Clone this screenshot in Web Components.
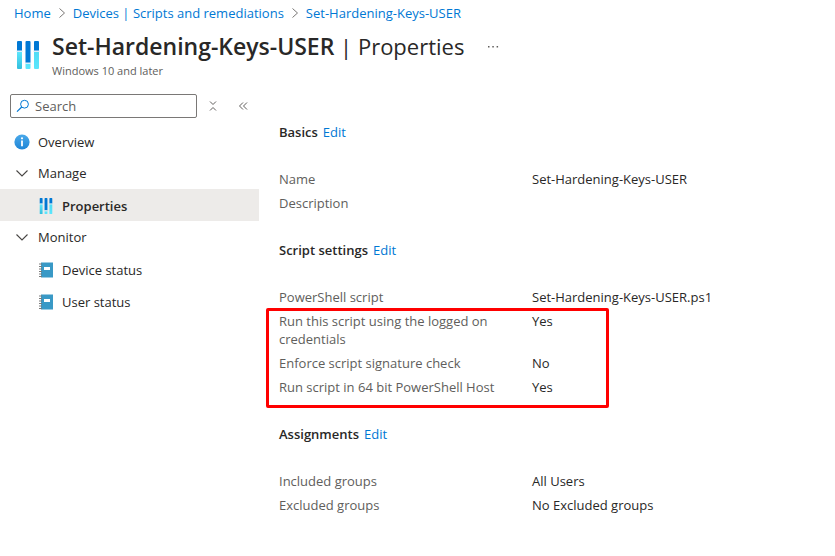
<!DOCTYPE html>
<html lang="en">
<head>
<meta charset="utf-8">
<title>Set-Hardening-Keys-USER | Properties</title>
<style>
  body {
    margin: 0;
    background: #fff;
    color: #292827;
    font: 13px/18px "Open Sans", "Noto Sans", sans-serif;
    --link: #0078d4;
    --muted: #605e5c;
  }
</style>
</head>
<body>
<portal-page>
  <bread-crumbs slot="crumbs">
    <a href="#home">Home</a>
    <a href="#scripts">Devices | Scripts and remediations</a>
    <a href="#script">Set-Hardening-Keys-USER</a>
  </bread-crumbs>
  <blade-title slot="title">
    <span slot="name">Set-Hardening-Keys-USER</span>
    <span slot="view">Properties</span>
    <span slot="sub">Windows 10 and later</span>
  </blade-title>
  <side-menu slot="menu">
    <menu-item icon="info" href="#overview">Overview</menu-item>
    <menu-group label="Manage">
      <menu-item icon="sliders" href="#properties" nested current>Properties</menu-item>
    </menu-group>
    <menu-group label="Monitor">
      <menu-item icon="book" href="#device" nested>Device status</menu-item>
      <menu-item icon="book" href="#user" nested>User status</menu-item>
    </menu-group>
  </side-menu>
  <summary-section heading="Basics">
    <summary-row label="Name">Set-Hardening-Keys-USER</summary-row>
    <summary-row label="Description"></summary-row>
  </summary-section>
  <summary-section heading="Script settings">
    <summary-row label="PowerShell script">Set-Hardening-Keys-USER.ps1</summary-row>
    <marked-rows>
      <summary-row label="Run this script using the logged on credentials">Yes</summary-row>
      <summary-row label="Enforce script signature check">No</summary-row>
      <summary-row label="Run script in 64 bit PowerShell Host">Yes</summary-row>
    </marked-rows>
  </summary-section>
  <summary-section heading="Assignments">
    <summary-row label="Included groups">All Users</summary-row>
    <summary-row label="Excluded groups">No Excluded groups</summary-row>
  </summary-section>
</portal-page>

<script>
const ICONS = {
  info: `<svg viewBox="0 0 16 16" width="16" height="16"><defs><linearGradient id="g" x1="0" y1="0" x2="0" y2="1"><stop offset="0" stop-color="#4aa9ea"/><stop offset="1" stop-color="#1f85d6"/></linearGradient></defs><circle cx="8" cy="8" r="7.6" fill="url(#g)"/><circle cx="8" cy="4.3" r="1.1" fill="#fff"/><path d="M7.1 6.5h1.8v5.7H7.1z" fill="#fff"/></svg>`,
  sliders: `<svg viewBox="0 0 24 28" width="100%" height="100%"><defs><linearGradient id="g" x1="0" y1="0" x2="0" y2="1"><stop offset="0" stop-color="#5ce6fc"/><stop offset="1" stop-color="#32bedd"/></linearGradient><linearGradient id="h" x1="0" y1="1" x2="0" y2="0"><stop offset="0" stop-color="#5ce6fc"/><stop offset="1" stop-color="#50dcf5"/></linearGradient></defs><path d="M1 1q0-1 1-1h3q1 0 1 1v9H1zM18 1q0-1 1-1h3q1 0 1 1v9h-5zM9.500 1q0-1 1-1h3q1 0 1 1v21h-5z" fill="#0078d4"/><path d="M1 11h5v16q0 1-1 1H2q-1 0-1-1z" fill="url(#g)"/><path d="M18 11h5v16q0 1-1 1h-3q-1 0-1-1zM9.500 23h5v4q0 1-1 1h-3q-1 0-1-1z" fill="url(#h)"/><path d="M.5 9.500h6v1.500h-6zM17.500 9.500h6v1.500h-6zM9 21.500h6V23H9z" fill="#d8eefa"/></svg>`,
  book: `<svg viewBox="0 0 16 16" width="16" height="16"><path d="M3 .5h12v15H3z" fill="#3999c6"/><path d="M6 5h6v3H6z" fill="#fff"/><path d="M1 2h3M1 4.5h3M1 7h3M1 9.5h3M1 12h3M1 14.5h3" stroke="#7a7a7a" stroke-width="1"/></svg>`,
  chevron: `<svg viewBox="0 0 14 14" width="14" height="14"><path d="M1.500 4.500 7 10l5.500-5.500" fill="none" stroke="#484644" stroke-width="1.100"/></svg>`,
  search: `<svg viewBox="0 0 14 14" width="14" height="14"><circle cx="8.500" cy="5.200" r="3.900" fill="none" stroke="#0078d4"/><path d="M5.700 8 1 12.600" stroke="#0078d4" stroke-width="1.200"/></svg>`
};

function define(name, render) {
  customElements.define(name, class extends HTMLElement {
    constructor() {
      super();
      const t = document.createElement("template");
      t.innerHTML = render(this);
      this.attachShadow({ mode: "open" }).append(t.content.cloneNode(true));
    }
  });
}

define("portal-page", () => `
  <style>
    :host { display: block; }
    .body { display: grid; grid-template-columns: 259px 1fr; }
    main { padding: 39px 20px 20px; display: grid; gap: 29px; align-content: start; min-width: 0; }
    header { height: 84px; }
  </style>
  <header><slot name="crumbs"></slot><slot name="title"></slot></header>
  <div class="body"><slot name="menu"></slot><main><slot></slot></main></div>`);

define("bread-crumbs", () => `
  <style>
    :host { display: flex; align-items: center; padding: 4px 14px 0; height: 18px; white-space: nowrap; }
    ::slotted(a) { color: var(--link); text-decoration: none; }
    nav { display: flex; align-items: center; }
    svg { margin: 0 7px; }
  </style><nav aria-label="Breadcrumb"></nav>`);
for (const el of document.querySelectorAll("bread-crumbs")) {
  const nav = el.shadowRoot.querySelector("nav");
  [...el.children].forEach((a, i) => {
    if (i) nav.insertAdjacentHTML("beforeend", `<svg viewBox="0 0 8 10" width="8" height="10"><path d="M1.500.500 6.500 5l-5 4.500" fill="none" stroke="#797775"/></svg>`);
    const s = document.createElement("slot");
    s.name = a.slot = "c" + i;
    nav.append(s);
  });
}

define("blade-title", () => `
  <style>
    :host { display: grid; grid-template-columns: 24px 1fr; column-gap: 12px; padding: 7px 16px 0; }
    .icon { height: 28px; margin-top: 12px; }
    h1 { margin: 0; font-size: 22px; line-height: 34px; font-weight: 400; white-space: nowrap; display: flex; align-items: center; }
    b { font-weight: 600; font-size: 23px; }
    h1 span { white-space: pre; }
    p { margin: 0; padding-top: 1px; font-size: 11px; line-height: 14px; color: var(--muted); }
    button { border: 0; background: none; padding: 0; margin-left: 22px; width: 14px; height: 14px; display: block; }
    svg { display: block; }
  </style>
  <div class="icon">${ICONS.sliders}</div>
  <div><h1><b><slot name="name"></slot></b><span> | </span><slot name="view"></slot>
  <button aria-label="More"><svg viewBox="0 0 14 14" width="14" height="14" fill="#605e5c"><path d="M2 7h1.500v1.500H2zM6.300 7h1.500v1.500H6.300zM10.600 7h1.500v1.500h-1.500z"/></svg></button></h1>
  <p><slot name="sub"></slot></p></div>`);

define("side-menu", () => `
  <style>
    :host { display: block; padding-top: 10px; }
    .tools { display: flex; align-items: center; padding-left: 10px; margin-bottom: 7px; }
    label { display: flex; align-items: center; gap: 5px; width: 187px; height: 24px; box-sizing: border-box; border: 1px solid #7a7876; border-radius: 2px; padding: 0 5px; }
    input { flex: 1; min-width: 0; border: 0; padding: 0; outline: 0; background: none; font: inherit; color: inherit; }
    input::placeholder { color: var(--muted); opacity: 1; }
    button { border: 0; background: none; padding: 0; width: 10px; height: 10px; }
    .fold { margin-left: 11px; } .hide { margin-left: 20px; }
    svg { display: block; flex: none; }
  </style>
  <div class="tools">
    <label>${ICONS.search}<input type="text" placeholder="Search" aria-label="Search"></label>
    <button class="fold" aria-label="Collapse all"><svg viewBox="0 0 10 10" width="10" height="10"><path d="M2 .5 5 3.500l3-3M2 9.500l3-3 3 3" fill="none" stroke="#605e5c"/></svg></button>
    <button class="hide" aria-label="Hide menu"><svg viewBox="0 0 10 10" width="10" height="10"><path d="M5 1.500 1.500 5 5 8.500M9 1.500 5.500 5 9 8.500" fill="none" stroke="#605e5c"/></svg></button>
  </div>
  <nav><slot></slot></nav>`);

define("menu-item", el => `
  <style>
    :host { display: block; }
    a { display: flex; align-items: center; gap: 8px; height: 32px; box-sizing: border-box; padding: 2px 0 0 14px; color: inherit; text-decoration: none; }
    :host([nested]) a { padding-left: 38px; }
    :host([current]) a { background: #edebe9; font-weight: 600; }
    i { width: 16px; height: 16px; flex: none; }
    svg { display: block; }
  </style>
  <a href="${el.getAttribute("href")}"${el.hasAttribute("current") ? ' aria-current="page"' : ""}><i>${ICONS[el.getAttribute("icon")]}</i><slot></slot></a>`);

define("menu-group", el => `
  <style>
    :host { display: block; }
    button { display: flex; align-items: center; gap: 9px; width: 100%; height: 32px; border: 0; background: none; padding: 0 0 0 15px; font: inherit; color: inherit; }
  </style>
  <button aria-expanded="true">${ICONS.chevron}${el.getAttribute("label")}</button><slot></slot>`);

define("summary-section", el => `
  <style>
    :host { display: block; }
    .head { display: flex; gap: 5px; margin-bottom: 29px; }
    h2 { margin: 0; font: inherit; font-weight: 600; }
    a { color: var(--link); text-decoration: none; }
    .rows { display: grid; gap: 6px; }
  </style>
  <div class="head"><h2>${el.getAttribute("heading")}</h2><a href="#edit">Edit</a></div>
  <div class="rows"><slot></slot></div>`);

define("summary-row", el => `
  <style>
    :host { display: grid; grid-template-columns: 218px 1fr; column-gap: 35px; min-height: 18px; }
    .label { color: var(--muted); }
  </style>
  <span class="label">${el.getAttribute("label")}</span><span><slot></slot></span>`);

define("marked-rows", () => `
  <style>
    :host { display: grid; gap: 6px; position: relative; }
    :host::after { content: ""; position: absolute; left: -13px; top: -4px; bottom: -12px; width: 343px; box-sizing: border-box; border: 3px solid #f00; border-radius: 2px; pointer-events: none; }
  </style><slot></slot>`);
</script>
</body>
</html>
